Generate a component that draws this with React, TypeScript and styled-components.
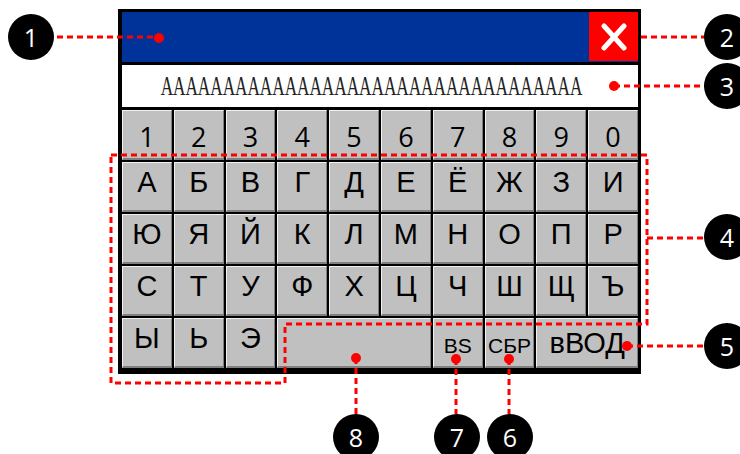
import React from "react";
import styled, { createGlobalStyle } from "styled-components";

const GlobalStyle = createGlobalStyle`
  html, body {
    margin: 0;
    padding: 0;
    background: #fff;
  }
`;

const Stage = styled.div`
  position: relative;
  width: 740px;
  height: 454px;
  overflow: hidden;
  box-sizing: border-box;
  padding: 9px 0 0 118px;
  background: #fff;
`;

const Panel = styled.div`
  width: 523px;
  box-sizing: border-box;
  border-style: solid;
  border-color: #000;
  border-width: 3px 3px 6px 4px;
  background: #000;
  display: flex;
  flex-direction: column;
  gap: 3px;
`;

const TitleBar = styled.div`
  height: 50px;
  background: #003399;
  display: flex;
  justify-content: flex-end;
  align-items: flex-start;
`;

const CloseButton = styled.div`
  width: 49px;
  height: 49px;
  background: #ff0000;
  display: flex;
  align-items: center;
  justify-content: center;
`;

const Field = styled.div`
  height: 42px;
  background: #fff;
  display: flex;
  align-items: center;
  justify-content: center;
  overflow: hidden;
  padding-right: 18px;
`;

const FieldText = styled.span`
  display: inline-block;
  white-space: nowrap;
  font-family: "Liberation Serif", "Times New Roman", serif;
  font-size: 27px;
  color: #222;
  transform: scaleX(0.636);
  transform-origin: center;
`;

const Keys = styled.div`
  display: grid;
  grid-template-columns: repeat(10, 1fr);
  grid-auto-rows: 50px;
  gap: 2px;
`;

type Kind = "digit" | "letter" | "small" | "enter";

const fonts: Record<Kind, string> = {
  digit: `font-family: "Open Sans", "DejaVu Sans", sans-serif; font-size: 27px; padding-top: 3px;`,
  letter: `font-family: "Liberation Sans", Arial, sans-serif; font-size: 29px; padding-bottom: 8px;`,
  small: `font-family: "Liberation Sans", Arial, sans-serif; font-size: 21px; padding-top: 6px;`,
  enter: `font-family: "Liberation Sans", Arial, sans-serif; font-size: 29px; padding-top: 2px;`,
};

const Key = styled.div<{ $span?: number; $kind: Kind }>`
  grid-column: span ${(p) => p.$span ?? 1};
  box-sizing: border-box;
  background: #c0c0c0;
  border-top: 1px solid #f2f2f2;
  border-left: 1px solid #f2f2f2;
  border-right: 1px solid #808080;
  border-bottom: 2px solid #808080;
  display: flex;
  align-items: center;
  justify-content: center;
  color: #000;
  line-height: 1;
  ${(p) => fonts[p.$kind]}
`;

const Overlay = styled.svg`
  position: absolute;
  left: 0;
  top: 0;
  pointer-events: none;
`;

const Badge = styled.div`
  position: absolute;
  width: 46px;
  height: 46px;
  margin: -23px 0 0 -23px;
  border-radius: 50%;
  background: #000;
  color: #fff;
  display: flex;
  align-items: center;
  justify-content: center;
  font-family: "Open Sans", "DejaVu Sans", sans-serif;
  font-size: 25px;
  line-height: 1;
`;

const digits = "1234567890".split("");
const letters = "АБВГДЕЁЖЗИЮЯЙКЛМНОПРСТУФХЦЧШЩЪ".split("");

const badges: [number, number, number][] = [
  [1, 31, 37],
  [2, 727, 37],
  [3, 727, 86],
  [4, 727, 237],
  [5, 727, 346],
  [6, 510, 437],
  [7, 457, 437],
  [8, 356, 437],
];

const dash = { stroke: "#ff0000", strokeWidth: 3, strokeDasharray: "6 4", fill: "none" };

const Callouts = () => (
  <Overlay width={740} height={454} viewBox="0 0 740 454">
    <line x1={57} y1={37} x2={159} y2={37} {...dash} />
    <line x1={641} y1={37} x2={705} y2={37} {...dash} />
    <line x1={614} y1={86} x2={705} y2={86} {...dash} />
    <polygon
      points="111,155 647,155 647,324 285,324 285,383 111,383"
      {...dash}
    />
    <line x1={647} y1={238} x2={705} y2={238} {...dash} />
    <line x1={627} y1={346} x2={705} y2={346} {...dash} />
    <line x1={509} y1={359} x2={509} y2={414} {...dash} />
    <line x1={456} y1={359} x2={456} y2={414} {...dash} />
    <line x1={356} y1={358} x2={356} y2={414} {...dash} />
    <g fill="#ff0000">
      <circle cx={159} cy={38} r={5} />
      <circle cx={614} cy={86} r={5} />
      <circle cx={627} cy={346} r={5} />
      <circle cx={509} cy={359} r={5} />
      <circle cx={456} cy={359} r={5} />
      <circle cx={356} cy={358} r={5} />
    </g>
  </Overlay>
);

export default function App() {
  return (
    <Stage>
      <GlobalStyle />
      <Panel>
        <TitleBar>
          <CloseButton>
            <svg width="26" height="28" viewBox="0 0 26 28">
              <path
                d="M3 3 L23 25 M23 3 L3 25"
                stroke="#fff"
                strokeWidth="5"
                strokeLinecap="round"
              />
            </svg>
          </CloseButton>
        </TitleBar>
        <Field>
          <FieldText>{"A".repeat(34)}</FieldText>
        </Field>
        <Keys>
          {digits.map((d) => (
            <Key key={d} $kind="digit">
              {d}
            </Key>
          ))}
          {letters.map((l) => (
            <Key key={l} $kind="letter">
              {l}
            </Key>
          ))}
          <Key $kind="letter">Ы</Key>
          <Key $kind="letter">Ь</Key>
          <Key $kind="letter">Э</Key>
          <Key $kind="letter" $span={3} />
          <Key $kind="small">BS</Key>
          <Key $kind="small">СБР</Key>
          <Key $kind="enter" $span={2}>
            вВОД
          </Key>
        </Keys>
      </Panel>
      <Callouts />
      {badges.map(([n, x, y]) => (
        <Badge key={n} style={{ left: x, top: y }}>
          {n}
        </Badge>
      ))}
    </Stage>
  );
}
